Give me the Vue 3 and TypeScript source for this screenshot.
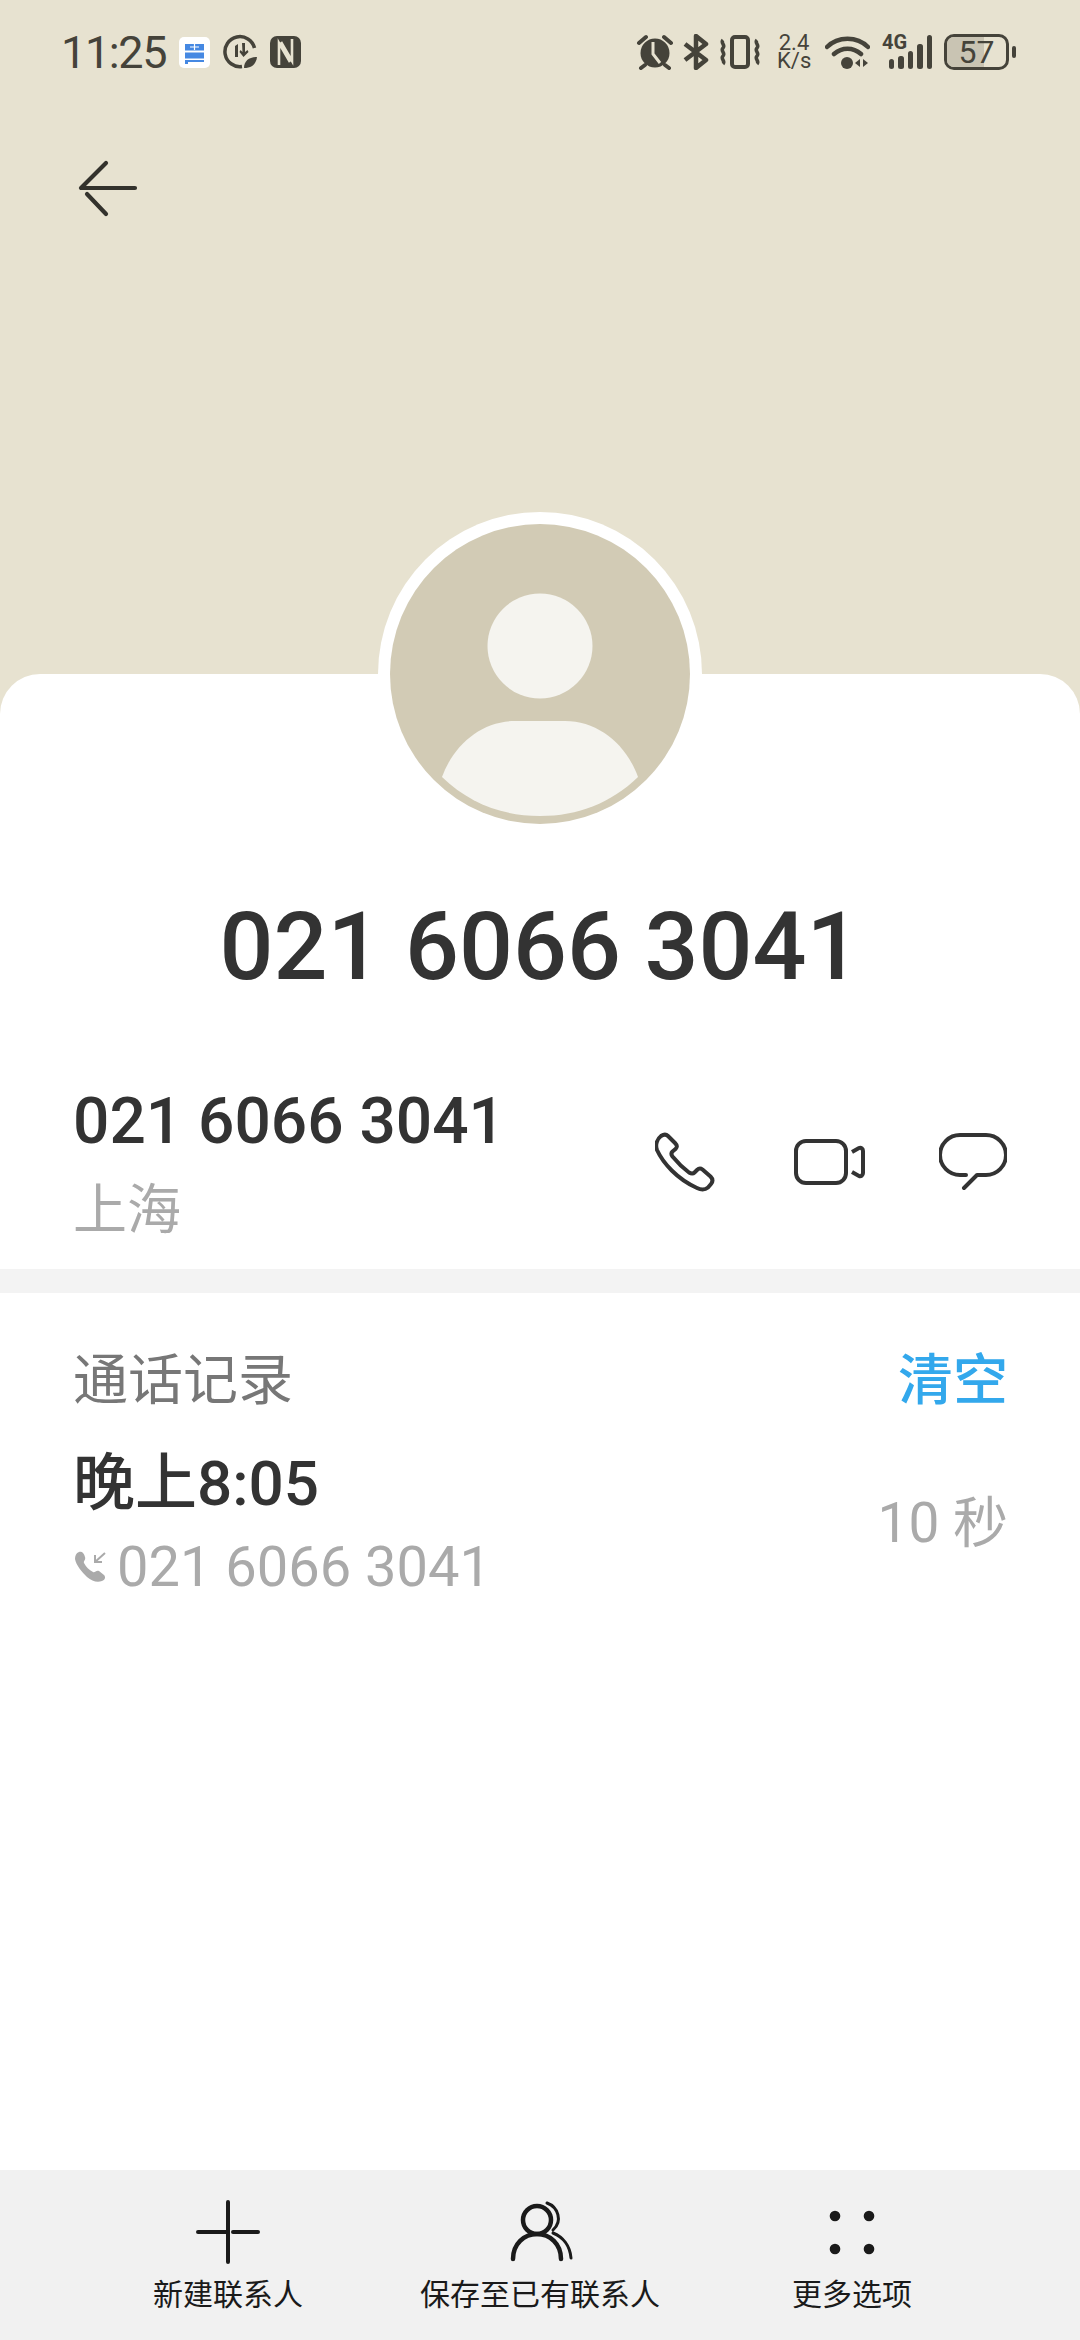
<template>
  <div class="page">
    <div class="status-bar">
      <div class="status-left">
        <span class="time">11:25</span>
        <svg class="ic-app" width="31" height="31" viewBox="0 0 31 31">
          <rect width="31" height="31" rx="5" fill="#fff" />
          <path d="M6 7h19v6.500H6zM6 15.500h19v6H6zM6 23h19v2H9v2H6z" fill="#4588e2" />
          <path d="M15.500 7v6M11 10h9" stroke="#fff" stroke-width="1.200" fill="none" />
        </svg>
        <svg class="ic-left" width="36" height="36" viewBox="0 0 36 36">
          <path d="M20 32.500A15 15 0 1 1 32.500 14" fill="none" stroke="#45433a" stroke-width="3.500" />
          <path d="M13 12l3-2v13h-3zM20 9h3v9l2.500-2 1 2-5 5-4-5 1-2 2 2z" fill="#45433a" />
          <path d="M22 34c0-7 5-11 13-11-1 7-5 11-13 11z" fill="#45433a" />
        </svg>
        <svg class="ic-left" width="31" height="32" viewBox="0 0 31 32">
          <rect width="31" height="32" rx="7" fill="#45433a" />
          <path d="M9 29V7l11 19M22 3v22L11 6" fill="none" stroke="#e7e2d0" stroke-width="2.600" />
        </svg>
      </div>
      <div class="status-right">
        <svg width="38" height="36" viewBox="0 0 38 36">
          <circle cx="19" cy="19" r="14.500" fill="#45433a" />
          <path d="M17 8v12l7 9" fill="none" stroke="#e7e2d0" stroke-width="3" />
          <path d="M3 9l7-6M35 9l-7-6M9 31l-4 3M29 31l4 3" stroke="#45433a" stroke-width="4" stroke-linecap="round" />
        </svg>
        <svg width="26" height="36" viewBox="0 0 26 36">
          <path d="M2 10l21 16-10 8V2l10 8L2 26" fill="none" stroke="#45433a" stroke-width="4.500" stroke-linejoin="round" />
        </svg>
        <svg width="44" height="34" viewBox="0 0 44 34">
          <rect x="14" y="2" width="16" height="30" rx="3" fill="none" stroke="#45433a" stroke-width="4" />
          <path d="M5 5c-3 3 3 5 0 8s3 5 0 8 3 5 0 8M39 5c-3 3 3 5 0 8s3 5 0 8 3 5 0 8" fill="none" stroke="#45433a" stroke-width="3.500" />
        </svg>
        <div class="speed">{{ speedText }}</div>
        <svg width="45" height="36" viewBox="0 0 45 36">
          <path d="M2 13C13 2 32 2 43 13M9 20c8-7 19-7 27 0" fill="none" stroke="#45433a" stroke-width="4.500" stroke-linecap="round" />
          <circle cx="22" cy="29" r="6" fill="#45433a" />
          <path d="M35 25l-5 4 5 4zM38 25l5 4-5 4z" fill="#45433a" />
        </svg>
        <div class="signal">
          <span class="net">4G</span>
          <i class="bar b1"></i><i class="bar b2"></i><i class="bar b3"></i><i class="bar b4"></i><i class="bar b5"></i>
        </div>
        <div class="battery">
          <div class="battery-body">
            <span class="battery-fill"></span>
            <span class="battery-text">57</span>
          </div>
          <i class="battery-nub"></i>
        </div>
      </div>
    </div>

    <div class="top-nav">
      <svg width="62" height="58" viewBox="0 0 62 58">
        <path d="M29 3L4 28H58M10 34l19 20" fill="none" stroke="#33322c" stroke-width="4.200" stroke-linecap="round" stroke-linejoin="round" />
      </svg>
    </div>

    <div class="card">
      <div class="avatar-ring">
        <svg class="avatar" width="300" height="300" viewBox="0 0 300 300">
          <circle cx="150" cy="150" r="150" fill="#d2cbb5" />
          <circle cx="150" cy="122" r="52.500" fill="#f5f4ef" />
          <path d="M52 253C64 220 92 197 125 197h50c33 0 61 23 73 56-27 26-60 39-98 39s-71-13-98-39z" fill="#f5f4ef" />
        </svg>
      </div>
      <h1 class="title">021 6066 3041</h1>

      <div class="number-row">
        <div class="number-info">
          <div class="number">021 6066 3041</div>
          <div class="place">上海</div>
        </div>
        <div class="actions">
          <svg class="phone" width="60" height="60" viewBox="0 0 60 60">
            <path d="M6 4C9 2 11 2 13 4L20 11C22.500 13.500 22.500 15 20.500 17L17.500 19.500C16 21 16 22.500 17.500 24.500C22 30 28 36 34 40.500C36.500 42 38 42 39.500 40.500L42 38C44 36 45.500 36 47.500 37.500L55.500 44.500C58 47 58 49.500 56 52L53 55.500C50 58 47 58.500 42 56C22 47 8 31 2 18C0 13 2 7 6 4Z" fill="none" stroke="#333" stroke-width="4" stroke-linejoin="round" />
          </svg>
          <svg width="74" height="50" viewBox="0 0 74 50">
            <rect x="4" y="4" width="50" height="42" rx="10" fill="none" stroke="#333" stroke-width="4" />
            <path d="M60 15L67 11C69 10 71 12 71 14V36C71 38 69 40 67 39L60 35" fill="none" stroke="#333" stroke-width="4" />
          </svg>
          <svg width="68" height="60" viewBox="0 0 68 60">
            <path d="M27 43H21A20 20 0 0 1 21 3H47A20 20 0 0 1 47 43H38L25 56" fill="none" stroke="#333" stroke-width="4" stroke-linecap="round" stroke-linejoin="round" />
          </svg>
        </div>
      </div>

      <div class="divider"></div>

      <div class="log">
        <div class="log-head">
          <span class="log-title">通话记录</span>
          <span class="log-clear">清空</span>
        </div>
        <div class="log-row">
          <div>
            <div class="log-time">晚上8:05</div>
            <div class="log-sub">
              <svg width="32" height="32" viewBox="0 0 32 32">
                <path d="M4 1c3-1 5 1 6 5 1 3-2 4-1 6 2 4 5 7 9 9 2 1 3-2 6-1l5 4c2 2 1 5-2 6-5 2-10 0-15-4C7 21 1 14 0 8 0 5 1 2 4 1z" fill="#aaa" />
                <path d="M30 2l-10 9M20 4v7h7" fill="none" stroke="#aaa" stroke-width="2" />
              </svg>
              <span>021 6066 3041</span>
            </div>
          </div>
          <span class="log-duration">10 秒</span>
        </div>
      </div>

      <div class="bottom-bar">
        <div class="tool" v-for="tool in tools" :key="tool.label">
          <svg width="80" height="66" viewBox="0 0 80 66">
            <template v-if="tool.icon === 'add'">
              <path d="M40 3V63M10 33H38M45 33H70" fill="none" stroke="#1a1a1a" stroke-width="4" stroke-linecap="round" />
            </template>
            <template v-else-if="tool.icon === 'person'">
              <circle cx="37" cy="21" r="14" fill="none" stroke="#1a1a1a" stroke-width="4.500" />
              <path d="M13 60C13 45 24 35 37 35S61 45 61 60" fill="none" stroke="#1a1a1a" stroke-width="4.500" stroke-linecap="round" />
              <path d="M47 4C58 8 63 22 53 31M53 34C63 38 70 47 71 59" fill="none" stroke="#1a1a1a" stroke-width="3" stroke-linecap="round" />
            </template>
            <template v-else>
              <circle cx="23" cy="17" r="5.300" fill="#1a1a1a" />
              <circle cx="57" cy="17" r="5.300" fill="#1a1a1a" />
              <circle cx="23" cy="50" r="5.300" fill="#1a1a1a" />
              <circle cx="57" cy="50" r="5.300" fill="#1a1a1a" />
            </template>
          </svg>
          <span class="tool-label">{{ tool.label }}</span>
        </div>
      </div>
    </div>
  </div>
</template>

<script setup lang="ts">
const speedText = "2.4\nK/s";

const tools = [
  { icon: "add", label: "新建联系人" },
  { icon: "person", label: "保存至已有联系人" },
  { icon: "more", label: "更多选项" },
];
</script>

<style>
html,
body {
  margin: 0;
  background: #e7e2d0;
}
</style>

<style scoped>
.page {
  width: 1080px;
  height: 2340px;
  display: flex;
  flex-direction: column;
  overflow: hidden;
  background: #e7e2d0;
  font-family: Roboto, "Noto Sans CJK SC", sans-serif;
  color: #333;
}

/* Status bar */
.status-bar {
  height: 104px;
  padding: 0 64px 0 61px;
  box-sizing: border-box;
  display: flex;
  align-items: center;
  justify-content: space-between;
  color: #45433a;
}
.status-left,
.status-right {
  display: flex;
  align-items: center;
}
.time {
  font-size: 45px;
  width: 118px;
  letter-spacing: -1.4px;
}
.ic-left {
  margin-left: 12px;
}
.status-right {
  gap: 9px;
}
.speed {
  white-space: pre-line;
  text-align: center;
  font-size: 22px;
  line-height: 18px;
  width: 34px;
  margin: 0 5px 0 6px;
}
.signal {
  display: flex;
  align-items: flex-end;
  position: relative;
  gap: 4px;
  width: 50px;
  height: 34px;
  margin-left: 3px;
  justify-content: flex-end;
}
.net {
  position: absolute;
  left: 0;
  top: -3px;
  font-size: 20px;
  line-height: 20px;
  font-weight: 700;
}
.bar {
  width: 5.500px;
  background: #45433a;
  border-radius: 2.500px;
}
.b1 {
  height: 10px;
}
.b2 {
  height: 13px;
}
.b3 {
  height: 18px;
}
.b4 {
  height: 25px;
}
.b5 {
  height: 34px;
}
.battery {
  display: flex;
  align-items: center;
  gap: 3px;
  margin-left: 3px;
}
.battery-body {
  position: relative;
  width: 65px;
  height: 36px;
  box-sizing: border-box;
  border: 3px solid #45433a;
  border-radius: 10px;
  display: flex;
  align-items: center;
  justify-content: center;
  overflow: hidden;
}
.battery-fill {
  position: absolute;
  left: 0;
  top: 0;
  bottom: 0;
  width: 62%;
  background: #c9c4b3;
}
.battery-text {
  position: relative;
  font-size: 32px;
}
.battery-nub {
  width: 4px;
  height: 12px;
  border-radius: 2px;
  background: #45433a;
}

/* Back */
.top-nav {
  height: 570px;
  padding-left: 77px;
  padding-top: 56px;
  box-sizing: border-box;
}

/* Card */
.card {
  flex: 1;
  display: flex;
  flex-direction: column;
  min-height: 0;
  background: #fff;
  border-radius: 40px 40px 0 0;
}
.avatar-ring {
  width: 324px;
  height: 324px;
  margin: -162px auto 0;
  box-sizing: border-box;
  padding: 12px;
  border-radius: 50%;
  background: #fff;
}
.avatar {
  display: block;
}
.title {
  margin: 56px 0 0;
  text-align: center;
  font-size: 95px;
  line-height: 110px;
  font-weight: 500;
  color: #333;
}
.number-row {
  display: flex;
  justify-content: space-between;
  align-items: center;
  margin-top: 82px;
  padding: 0 73px;
}
.number {
  font-size: 64px;
  line-height: 76px;
  font-weight: 500;
}
.place {
  margin-top: 12px;
  font-size: 54px;
  line-height: 78px;
  color: #aaa;
}
.actions {
  display: flex;
  align-items: center;
  gap: 73px;
  margin-bottom: 10px;
}
.phone {
  margin-right: 4px;
}
.divider {
  height: 24px;
  margin-top: 19px;
  background: #f3f3f3;
}

/* Call log */
.log {
  flex: 1;
  padding: 49px 72px 0 73px;
}
.log-head {
  display: flex;
  justify-content: space-between;
  align-items: center;
  line-height: 76px;
  font-size: 55px;
}
.log-title {
  color: #777;
}
.log-clear {
  color: #33a8ec;
  font-weight: 500;
}
.log-row {
  display: flex;
  justify-content: space-between;
  align-items: center;
  margin-top: 26px;
}
.log-time {
  font-size: 62px;
  line-height: 80px;
  font-weight: 500;
}
.log-sub {
  display: flex;
  align-items: center;
  gap: 10px;
  margin-top: 7px;
  font-size: 56px;
  line-height: 72px;
  color: #aaa;
}
.log-sub svg {
  margin-left: 2px;
}
.log-duration {
  margin-bottom: 12px;
  font-size: 55px;
  color: #aaa;
}

/* Bottom bar */
.bottom-bar {
  height: 170px;
  padding: 29px 72px 0;
  box-sizing: border-box;
  display: grid;
  grid-template-columns: repeat(3, 1fr);
  background: #f1f1f1;
}
.tool {
  display: flex;
  flex-direction: column;
  align-items: center;
}
.tool-label {
  margin-top: 9px;
  font-size: 30px;
  line-height: 42px;
  color: #1a1a1a;
}
</style>
